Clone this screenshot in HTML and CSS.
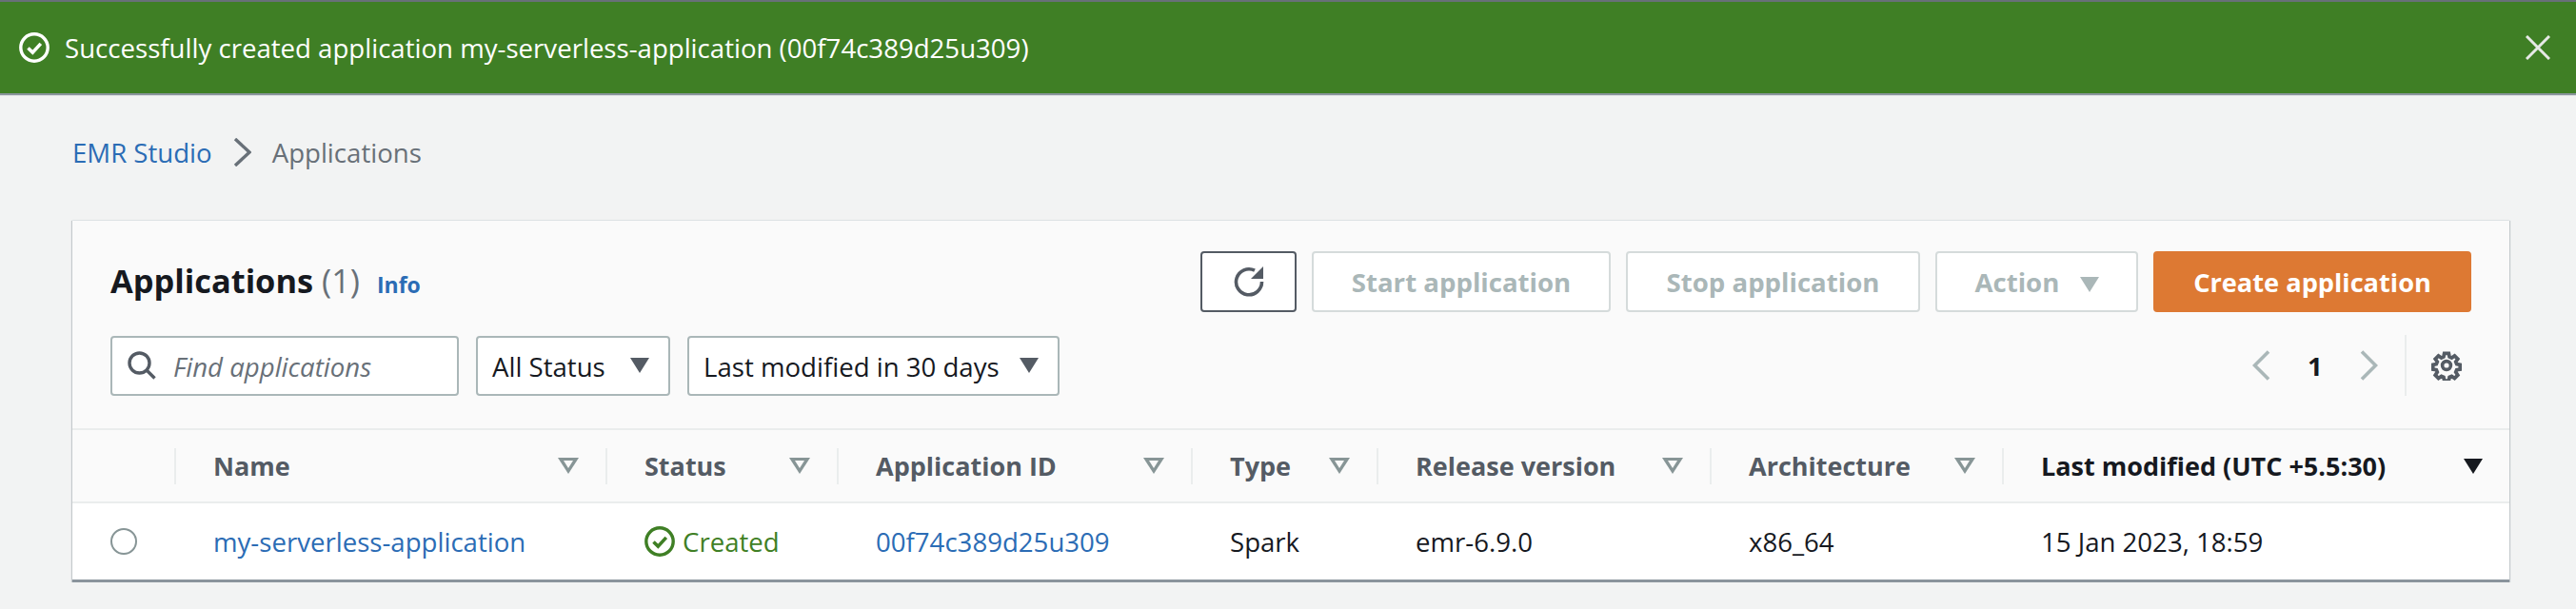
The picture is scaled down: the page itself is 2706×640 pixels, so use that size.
FILE: index.html
```html
<!DOCTYPE html>
<html>
  <head>
    <meta charset="UTF-8">
    <title>Applications</title>
    <link rel="stylesheet" href="styles.css">
  </head>
  <body>
    <!-- Success banner -->
    <div class="flash">
      <svg class="flash-icon" width="32" height="32" viewBox="0 0 32 32" fill="none" stroke="#fff" stroke-width="3.4">
        <circle cx="16" cy="16" r="14.2"/>
        <path d="M9.5 16.5l4.8 4.6 8.5-9.2" stroke-width="3.6"/>
      </svg>
      <span class="flash-text">Successfully created application my-serverless-application (00f74c389d25u309)</span>
      <svg class="flash-close" width="26" height="26" viewBox="0 0 26 26" fill="none" stroke="#e6e9e6" stroke-width="3">
        <path d="M1 1l24 24M25 1L1 25"/>
      </svg>
    </div>

    <div class="content">
      <div class="breadcrumb">
        <a class="link">EMR Studio</a>
        <svg width="19" height="30" viewBox="0 0 19 30" fill="none" stroke="#687078" stroke-width="3.4">
          <path d="M2 1l15 14L2 29"/>
        </svg>
        <span class="crumb-current">Applications</span>
      </div>

      <div class="card">
        <div class="card-top">
          <div class="toolbar">
            <h1 class="title">Applications <span class="count">(1)</span> <a class="info">Info</a></h1>
            <div class="actions">
              <button class="btn btn-icon">
                <svg width="32" height="32" viewBox="0 0 32 32" fill="none" stroke="#545b64" stroke-width="3.6">
                  <path d="M22 4.2A13.5 13.5 0 1 0 29.5 16"/>
                  <path d="M31 0v13H18z" fill="#545b64" stroke="none"/>
                </svg>
              </button>
              <button class="btn btn-start" disabled>Start application</button>
              <button class="btn btn-stop" disabled>Stop application</button>
              <button class="btn btn-action" disabled>Action <span class="caret caret-light"></span></button>
              <button class="btn btn-primary">Create application</button>
            </div>
          </div>

          <div class="filters">
            <div class="search">
              <svg width="30" height="30" viewBox="0 0 30 30" fill="none" stroke="#545b64" stroke-width="3.4">
                <circle cx="12.5" cy="12.5" r="10.5"/>
                <path d="M20 20l8.5 8.5"/>
              </svg>
              <span class="placeholder">Find applications</span>
            </div>
            <div class="select select-status"><span class="select-label">All Status</span> <span class="caret"></span></div>
            <div class="select select-date"><span class="select-label">Last modified in 30 days</span> <span class="caret"></span></div>
            <div class="pager">
              <svg width="19" height="32" viewBox="0 0 19 32" fill="none" stroke="#aab7b8" stroke-width="3.6">
                <path d="M17 1.5L2.5 16 17 30.5"/>
              </svg>
              <span class="page-num">1</span>
              <svg width="19" height="32" viewBox="0 0 19 32" fill="none" stroke="#aab7b8" stroke-width="3.6">
                <path d="M2 1.5L16.5 16 2 30.5"/>
              </svg>
              <div class="pager-line"></div>
              <svg width="32" height="32" viewBox="0 0 32 32" fill="none" stroke="#545b64" stroke-width="4.2">
                <circle cx="16" cy="16" r="4.4" stroke-width="3.6"/>
                <path d="M13.4 2h5.2l.8 4 2.6 1.1 3.4-2.3 3.7 3.7-2.3 3.4 1.1 2.6 4 .8v5.2l-4 .8-1.1 2.6 2.3 3.4-3.7 3.7-3.4-2.3-2.6 1.1-.8 4h-5.2l-.8-4-2.6-1.1-3.4 2.3-3.7-3.7 2.3-3.4-1.1-2.6-4-.8v-5.2l4-.8 1.1-2.6-2.3-3.4 3.7-3.7 3.4 2.3 2.6-1.1z" transform="translate(1.6 1.6) scale(.9)"/>
              </svg>
            </div>
          </div>
        </div>

        <table class="apps">
          <colgroup>
            <col class="col-radio"><col class="col-name"><col class="col-status"><col class="col-id">
            <col class="col-type"><col class="col-release"><col class="col-arch"><col class="col-date">
          </colgroup>
          <thead>
            <tr>
              <th></th>
              <th><div class="th-in">Name <span class="sort"></span></div></th>
              <th><div class="th-in">Status <span class="sort"></span></div></th>
              <th><div class="th-in">Application ID <span class="sort"></span></div></th>
              <th><div class="th-in">Type <span class="sort"></span></div></th>
              <th><div class="th-in">Release version <span class="sort"></span></div></th>
              <th><div class="th-in">Architecture <span class="sort"></span></div></th>
              <th><div class="th-in th-active">Last modified (UTC +5.5:30) <span class="caret caret-dark"></span></div></th>
            </tr>
          </thead>
          <tbody>
            <tr>
              <td class="radio-cell"><span class="radio"></span></td>
              <td><a class="link">my-serverless-application</a></td>
              <td>
                <span class="created">
                  <svg width="32" height="32" viewBox="0 0 32 32" fill="none" stroke="#3f7f25" stroke-width="3.4">
                    <circle cx="16" cy="16" r="14.2"/>
                    <path d="M9.5 16.5l4.8 4.6 8.5-9.2" stroke-width="3.6"/>
                  </svg>
                  Created
                </span>
              </td>
              <td><a class="link">00f74c389d25u309</a></td>
              <td>Spark</td>
              <td>emr-6.9.0</td>
              <td>x86_64</td>
              <td>15 Jan 2023, 18:59</td>
            </tr>
          </tbody>
        </table>
      </div>
    </div>
  </body>
</html>
```

FILE: styles.css
```css
body {
  font-family: "Open Sans", "Noto Sans", sans-serif;
  font-size: 27.6px;
  margin: 0;
  background-color: #f2f3f3;
  color: #16191f;
}
.link {
  color: #2b6cb5;
}

/* Banner */
.flash {
  display: flex;
  align-items: center;
  height: 96px;
  padding: 0 27px 0 20px;
  border-top: 2px solid #687078;
  background-color: #3f7f25;
  box-shadow: 0 2px 1px #8a949c;
  color: white;
}
.flash-icon {
  margin-right: 16px;
}
.flash-text {
  flex: 1;
}

/* Breadcrumb */
.content {
  padding: 0 70px 0 76px;
}
.breadcrumb {
  display: flex;
  align-items: center;
  gap: 22px;
  height: 134px;
  padding-bottom: 10px;
  box-sizing: border-box;
}
.crumb-current {
  color: #687078;
}

/* Card */
.card {
  background-color: white;
  border-bottom: 3px solid #8a949c;
  box-shadow: 1px 0 1px #c4c9cc, -1px 0 1px #c4c9cc, 0 -1px 1px #eaeded;
}
.card-top {
  padding: 32px 40px 34px;
  background-color: #fafafa;
}
.toolbar {
  display: flex;
  align-items: center;
  justify-content: space-between;
  height: 64px;
}
.title {
  margin: 0 0 4px;
  font-size: 34.4px;
  font-weight: bold;
}
.count {
  color: #687078;
  font-weight: normal;
}
.info {
  margin-left: 9px;
  color: #2b6cb5;
  font-size: 23px;
}
.actions {
  display: flex;
  gap: 16px;
}
.btn {
  height: 64px;
  padding: 0;
  border: 2px solid #d5dbdb;
  border-radius: 4px;
  background: white;
  color: #aab7b8;
  font-family: inherit;
  font-size: 27.6px;
  font-weight: bold;
}
.btn-icon {
  display: flex;
  align-items: center;
  justify-content: center;
  width: 101px;
  border-color: #545b64;
}
.btn-start {
  width: 314px;
}
.btn-stop {
  width: 309px;
}
.btn-action {
  width: 213px;
}
.btn-primary {
  width: 334px;
  border-color: #dd7933;
  background-color: #dd7933;
  color: white;
  font-size: 27.2px;
}

/* Filters row */
.filters {
  display: flex;
  align-items: center;
  gap: 18px;
  margin-top: 24px;
}
.search, .select {
  display: flex;
  align-items: center;
  height: 63px;
  border: 2px solid #aab7b8;
  border-radius: 4px;
  background: white;
  box-sizing: border-box;
}
.search {
  width: 366px;
  padding-left: 16px;
  gap: 18px;
}
.placeholder, .select-label {
  padding-top: 2px;
}
.placeholder {
  color: #687078;
  font-style: italic;
}
.select {
  justify-content: space-between;
  padding: 0 20px 0 15px;
}
.select-status {
  width: 204px;
}
.select-date {
  width: 391px;
}
.caret {
  display: inline-block;
  width: 0;
  height: 0;
  border-top: 16px solid #545b64;
  border-left: 10px solid transparent;
  border-right: 10px solid transparent;
}
.caret-light {
  margin-left: 14px;
  border-top-color: #aab7b8;
}
.caret-dark {
  border-top-color: #16191f;
}
.pager {
  display: flex;
  align-items: center;
  margin-left: auto;
  margin-right: 10px;
}
.page-num {
  width: 94px;
  font-weight: bold;
  text-align: center;
}
.pager-line {
  width: 2px;
  height: 64px;
  margin: 0 26px 0 28px;
  background-color: #eaeded;
}

/* Table */
.apps {
  width: 100%;
  border-collapse: collapse;
  table-layout: fixed;
}
.col-radio { width: 107px; }
.col-name { width: 453px; }
.col-status { width: 243px; }
.col-id { width: 372px; }
.col-type { width: 195px; }
.col-release { width: 350px; }
.col-arch { width: 307px; }
.apps th {
  height: 75px;
  padding: 0;
  border-top: 2px solid #eaeded;
  border-bottom: 2px solid #eaeded;
  background-color: #fafafa;
  color: #545b64;
  font-size: 27px;
  text-align: left;
}
.th-in {
  display: flex;
  align-items: center;
  justify-content: space-between;
  height: 38px;
  padding: 0 28px 0 39px;
  border-left: 2px solid #eaeded;
}
.th-active {
  color: #16191f;
}
.sort {
  display: inline-block;
  width: 0;
  height: 0;
  border-top: 17px solid #879596;
  border-left: 11px solid transparent;
  border-right: 11px solid transparent;
  position: relative;
}
/* hollow centre of the sort arrow */
.sort::after {
  content: "";
  position: absolute;
  top: -14px;
  left: -5px;
  border-top: 8px solid #fafafa;
  border-left: 5px solid transparent;
  border-right: 5px solid transparent;
}
.apps td {
  height: 80px;
  padding: 0 0 0 41px;
  white-space: nowrap;
}
.apps .radio-cell {
  padding-left: 40px;
}
.radio {
  display: block;
  width: 28px;
  height: 28px;
  border: 2px solid #879596;
  border-radius: 50%;
  box-sizing: border-box;
}
.created {
  display: flex;
  align-items: center;
  gap: 8px;
  color: #3f7f25;
}
```
